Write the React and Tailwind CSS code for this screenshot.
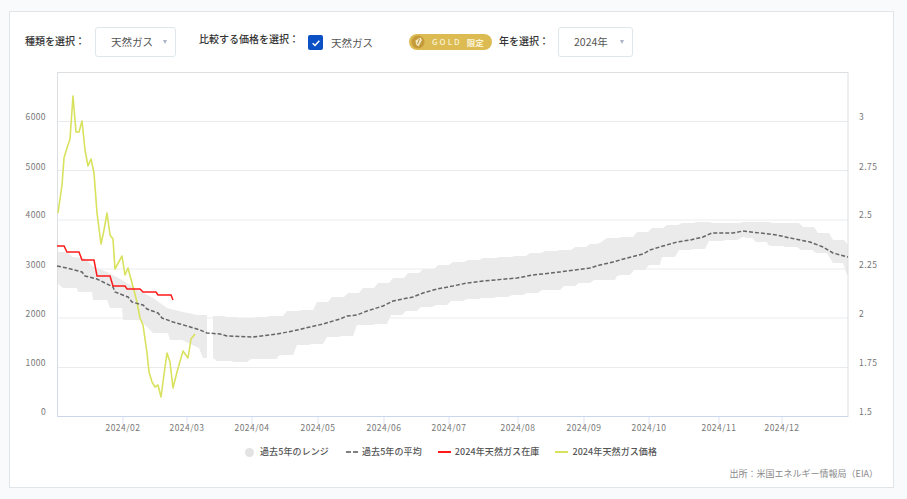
import React from 'react';

// all chart coordinates are in page pixels, the svg viewBox starts at the chart corner
const upperA = [[57,252],[68,252],[72,257],[85,258],[92,266],[107,272],[122,280],[140,291],[153,298],[167,308],[183,312],[197,315],[207,315]];
const lowerA = [[207,358],[203,358],[199,348],[182,340],[170,340],[168,333],[153,333],[140,320],[123,320],[122,308],[110,308],[107,300],[93,300],[92,292],[78,292],[77,288],[63,288],[57,283]];
const upperB = [[213,316],[227,317],[240,318],[257,317],[270,316],[287,311],[302,310],[317,302],[332,297],[348,293],[363,288],[378,283],[393,278],[408,273],[423,269],[438,265],[453,262],[468,260],[483,258],[500,257],[515,256],[530,253],[545,251],[560,250],[575,247],[590,244],[600,243],[607,238],[622,237],[637,232],[652,228],[667,225],[682,223],[697,222],[713,223],[728,223],[743,222],[758,222],[773,223],[788,223],[803,227],[818,233],[833,240],[848,245]];
const lowerB = [[848,275],[847,275],[843,263],[833,263],[827,253],[812,250],[797,247],[782,246],[768,245],[767,242],[752,238],[743,237],[737,240],[722,241],[705,249],[690,250],[675,257],[662,257],[660,265],[645,270],[630,275],[617,276],[615,280],[600,280],[590,283],[575,286],[560,290],[538,293],[523,295],[508,297],[493,298],[478,299],[463,301],[447,305],[432,307],[417,311],[402,315],[387,324],[372,325],[353,336],[338,337],[323,344],[308,345],[293,355],[278,356],[277,359],[260,359],[247,362],[233,362],[232,361],[217,361],[213,358]];
const avg = [[57,266],[67,268],[82,272],[85,276],[97,279],[113,287],[115,292],[128,297],[132,302],[143,305],[147,309],[158,313],[162,318],[173,322],[187,326],[200,330],[207,333],[220,334],[227,336],[253,337],[277,334],[293,331],[310,327],[323,324],[340,319],[347,316],[357,315],[367,311],[383,306],[393,301],[413,297],[423,293],[437,289],[453,286],[467,283],[483,281],[517,278],[533,275],[560,272],[575,270],[590,268],[600,265],[613,262],[627,258],[643,254],[650,250],[663,246],[677,242],[690,240],[703,237],[712,233],[733,233],[743,231],[760,233],[777,235],[790,238],[810,242],[823,247],[833,253],[848,257]];
const stock = [[57,246],[64,246],[67,252],[79,252],[82,260],[94,260],[97,276],[110,276],[113,286],[125,286],[127,289],[140,289],[143,292],[156,292],[158,295],[171,295],[173,300]];
const price = [[58,213],[62,185],[64,158],[67,148],[70,139],[73,96],[76,132],[79,132],[82,121],[85,150],[88,166],[91,159],[94,173],[97,213],[101,244],[104,230],[107,213],[110,235],[113,239],[115,269],[122,256],[125,275],[128,268],[132,283],[137,302],[140,318],[143,325],[147,353],[149,372],[152,382],[155,387],[158,385],[161,397],[165,367],[167,353],[170,362],[173,388],[177,372],[183,351],[188,358],[191,339],[195,334]];

const pts = (list) => list.map((p) => p.join(',')).join(' ');

// the range band moves in weekly stairs: flat first, then a short slope into the next value
const stairs = (list) => list.flatMap((p, i) => {
    if (i === 0) return [p];
    const prev = list[i - 1];
    const dx = p[0] - prev[0];
    if (Math.abs(dx) < 8) return [p];
    return [[p[0] - Math.sign(dx) * 4, prev[1]], p];
});

const gridLines = [121.5, 170.5, 220, 269, 318, 367.5];
const leftLabels = [['6000', 117], ['5000', 167], ['4000', 215], ['3000', 265], ['2000', 314], ['1000', 363], ['0', 412]];
const rightLabels = [['3', 117], ['2.75', 167], ['2.5', 215], ['2.25', 265], ['2', 314], ['1.75', 363], ['1.5', 412]];
const months = [['2024/02', 123], ['2024/03', 187], ['2024/04', 252], ['2024/05', 318], ['2024/06', 384], ['2024/07', 449], ['2024/08', 518], ['2024/09', 584], ['2024/10', 649], ['2024/11', 719], ['2024/12', 782]];

const SelectBox = ({ label, width }) => (
    <div className={`flex h-[30px] ${width} items-center justify-between rounded-[3px] border border-[#dfe7ea] bg-white pl-[15px] pr-[8px] text-[10.5px] text-[#555]`}>
        <span>{label}</span>
        <span className="h-0 w-0 border-x-[2.5px] border-t-[4px] border-x-transparent border-t-[#a9b5c4]" />
    </div>
);

const Chart = () => (
    <svg viewBox="20 62 860 372" className="ml-[10px] block h-[372px] w-[860px]" fontFamily="'Noto Sans CJK JP', sans-serif">
        {gridLines.map((y) => (
            <line key={y} x1="57.5" x2="848" y1={y} y2={y} stroke="#e9ecef" strokeWidth="1" />
        ))}
        <polygon points={pts([...upperA, ...lowerA])} fill="#ebebeb" />
        <polygon points={pts([...stairs(upperB), ...stairs(lowerB)])} fill="#ebebeb" />
        <rect x="57.5" y="72.5" width="790.5" height="344" fill="none" stroke="#dcdfe2" />
        <line x1="57" x2="848" y1="416.5" y2="416.5" stroke="#ccd6eb" />
        <line x1="57.5" x2="57.5" y1="300" y2="417" stroke="#d3dbe8" />
        {months.map(([m, x]) => (
            <g key={m}>
                <line x1={x} x2={x} y1="417" y2="424" stroke="#dde4f0" />
                <text x={x} y="431" textAnchor="middle" fontSize="8.5" letterSpacing="0.5" fill="#777">{m}</text>
            </g>
        ))}
        {leftLabels.map(([t, y]) => (
            <text key={t} x="46" y={y + 3} textAnchor="end" fontSize="8.5" letterSpacing="0.4" fill="#777">{t}</text>
        ))}
        {rightLabels.map(([t, y]) => (
            <text key={t} x="859" y={y + 3} fontSize="8.5" letterSpacing="0.5" fill="#777">{t}</text>
        ))}
        <polyline points={pts(price)} fill="none" stroke="#d8e25e" strokeWidth="1.6" strokeLinejoin="round" />
        <polyline points={pts(avg)} fill="none" stroke="#666" strokeWidth="1.5" strokeDasharray="4 2" />
        <polyline points={pts(stock)} fill="none" stroke="#ff1a1a" strokeWidth="1.5" />
    </svg>
);

const LegendItem = ({ children, label }) => (
    <div className="flex items-center gap-[4px]">
        {children}
        <span>{label}</span>
    </div>
);

const GoldBadge = () => (
    <div className="flex h-[16px] w-[83px] items-center rounded-full bg-[#dcbb53] pl-[2px] text-[#fbf3d6]">
        <svg viewBox="0 0 14 14" className="h-[14px] w-[14px] shrink-0">
            <circle cx="7" cy="7" r="6.5" fill="#c49a3a" />
            <path d="M9.5 2.5 L11 5 L7.5 11.5 L5 9.5 L4.5 5.5 Z" fill="#f3e6bd" />
            <path d="M8.5 4 L6.5 9" stroke="#a9822c" strokeWidth="0.8" fill="none" />
        </svg>
        <span className="ml-[7px] text-[8px] font-medium tracking-[2px]">GOLD</span>
        <span className="ml-[5px] text-[8.5px] font-bold">限定</span>
    </div>
);

export default function App() {
    return (
        <div className="min-h-[499px] bg-[#f8fafc] pl-[9px] pt-[11px] font-['Noto_Sans_CJK_JP','Noto_Sans',sans-serif]">
            <div className="h-[477px] w-[885px] border border-[#dfe5e8] bg-white">
                <div className="flex h-[50px] items-start pl-[15px] pt-[15px]">
                    <span className="mt-[6px] text-[10px] font-medium leading-[16px] text-[#333]">種類を選択：</span>
                    <div className="ml-[10px]">
                        <SelectBox label="天然ガス" width="w-[81px]" />
                    </div>
                    <span className="ml-[23px] mt-[4px] text-[10px] font-medium leading-[16px] text-[#333]">比較する価格を選択：</span>
                    <div className="ml-[9px] mt-[8px] flex items-center">
                        <span className="flex h-[15px] w-[15px] items-center justify-center rounded-[2px] bg-[#0b50c4]">
                            <svg viewBox="0 0 12 12" className="h-[10px] w-[10px]">
                                <path d="M2 6.3 L4.8 9 L10 3.2" fill="none" stroke="#fff" strokeWidth="1.8" />
                            </svg>
                        </span>
                        <span className="ml-[8px] text-[10.5px] leading-[13px] text-[#555]">天然ガス</span>
                    </div>
                    <div className="ml-[36px] mt-[7px]">
                        <GoldBadge />
                    </div>
                    <span className="ml-[7px] mt-[6px] text-[10px] font-medium leading-[16px] text-[#333]">年を選択：</span>
                    <div className="ml-[9px]">
                        <SelectBox label="2024年" width="w-[75px]" />
                    </div>
                </div>
                <Chart />
                <div className="mt-[11px] flex items-center gap-[16px] pl-[235px] text-[9px] font-medium leading-[14px] tracking-[0.1px] text-[#555]">
                    <LegendItem label="過去5年のレンジ">
                        <span className="mr-[2px] h-[9px] w-[9px] rounded-full bg-[#e3e3e3]" />
                    </LegendItem>
                    <LegendItem label="過去5年の平均">
                        <svg width="12" height="2" className="ml-[1px]"><line x1="0" x2="12" y1="1" y2="1" stroke="#555" strokeWidth="1.5" strokeDasharray="5 2" /></svg>
                    </LegendItem>
                    <LegendItem label="2024年天然ガス在庫">
                        <span className="h-[1.5px] w-[13px] bg-[#ff1a1a]" />
                    </LegendItem>
                    <LegendItem label="2024年天然ガス価格">
                        <span className="h-[1.5px] w-[13px] bg-[#d8e25e]" />
                    </LegendItem>
                </div>
                <div className="mt-[8px] pr-[15px] text-right text-[9px] leading-[14px] text-[#888]">出所：米国エネルギー情報局（EIA）</div>
            </div>
        </div>
    );
}
